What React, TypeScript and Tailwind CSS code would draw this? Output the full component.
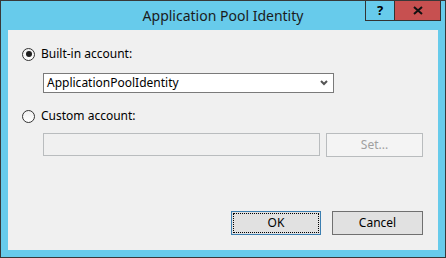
import React from 'react'

const ui = { fontFamily: '"Noto Sans", "Open Sans", sans-serif' }

function Radio({ checked }: { checked?: boolean }) {
  return (
    <span className="flex h-[13px] w-[13px] items-center justify-center rounded-full border border-[#333333] bg-gradient-to-b from-[#f0f0f0] to-[#ffffff]">
      {checked && <span className="h-[6px] w-[6px] rounded-full bg-[#1f1f1f]" />}
    </span>
  )
}

export default function App() {
  return (
    <div
      className="flex h-[258px] w-[446px] flex-col border border-[#383838] bg-[#67cbeb] text-[12px] text-black"
      style={ui}
    >
      {/* title bar */}
      <div className="grid h-[29px] grid-cols-[1fr_auto_1fr] items-start">
        <div />
        <div className="pt-[5px] text-[14px] leading-[20px] text-[#1b1b1b]">Application Pool Identity</div>
        <div className="flex justify-end pr-[4px]">
          <div className="flex h-[20px] w-[29px] items-center justify-center border-b border-l border-[#333333] text-[13px] font-bold leading-none">
            ?
          </div>
          <div className="flex h-[20px] w-[47px] items-center justify-center border-x border-b border-[#333333] bg-[#c75050]">
            <svg width="10" height="9" viewBox="0 0 10 9">
              <path d="M1 1 L9 8 M9 1 L1 8" stroke="#111" strokeWidth="2" />
            </svg>
          </div>
        </div>
      </div>

      {/* client */}
      <div className="mx-[7px] mb-[7px] flex flex-1 flex-col bg-[#f0f0f0] px-[14px] pt-[17px]">
        <div className="flex h-[14px] items-center gap-[6px]">
          <Radio checked />
          <span className="leading-none">Built-in account:</span>
        </div>

        <div className="ml-[21px] mt-[12px] flex h-[20px] w-[291px] items-center justify-between border border-[#7a7a7a] bg-white pl-[3px] pr-[5px]">
          <span className="leading-none">ApplicationPoolIdentity</span>
          <svg width="8" height="6" viewBox="0 0 8 6">
            <path d="M1 1 L4 4 L7 1" stroke="#555" strokeWidth="2" fill="none" />
          </svg>
        </div>

        <div className="mt-[16px] flex h-[14px] items-center gap-[6px]">
          <Radio />
          <span className="leading-none">Custom account:</span>
        </div>

        <div className="ml-[21px] mt-[10px] flex gap-[6px]">
          <div className="h-[23px] w-[277px] border border-[#b9bcbe] bg-[#f0f0f0]" />
          <div className="flex h-[24px] w-[97px] items-center justify-center border border-[#b9bcbe] bg-[#f4f4f4] text-[#a0a0a0]">
            Set...
          </div>
        </div>

        <div className="mt-auto mb-[15px] mr-[1px] flex justify-end gap-[11px]">
          <div className="h-[24px] w-[90px] border border-[#3c7fb1] bg-[#e1e1e1] p-[1px]">
            <div className="flex h-full w-full items-center justify-center border border-dotted border-black">OK</div>
          </div>
          <div className="flex h-[24px] w-[91px] items-center justify-center border border-[#707070] bg-[#e1e1e1]">
            Cancel
          </div>
        </div>
      </div>
    </div>
  )
}
